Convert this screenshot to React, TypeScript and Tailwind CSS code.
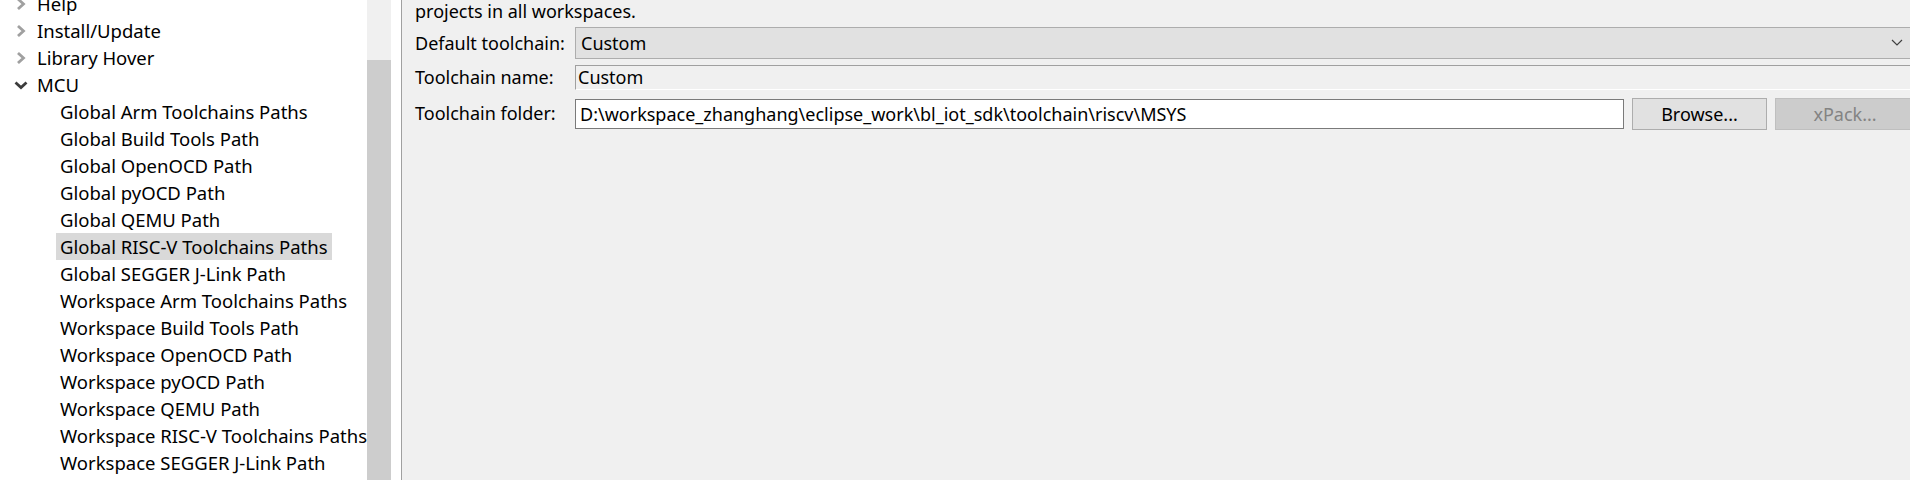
import React from 'react';

const font = { fontFamily: '"Noto Sans", "Open Sans", sans-serif' };

const topItems = ['Help', 'Install/Update', 'Library Hover'];

const mcuItems = [
  'Global Arm Toolchains Paths',
  'Global Build Tools Path',
  'Global OpenOCD Path',
  'Global pyOCD Path',
  'Global QEMU Path',
  'Global RISC-V Toolchains Paths',
  'Global SEGGER J-Link Path',
  'Workspace Arm Toolchains Paths',
  'Workspace Build Tools Path',
  'Workspace OpenOCD Path',
  'Workspace pyOCD Path',
  'Workspace QEMU Path',
  'Workspace RISC-V Toolchains Paths',
  'Workspace SEGGER J-Link Path',
];

const ChevronRight = () => (
  <svg width="14" height="14" viewBox="0 0 14 14" className="shrink-0">
    <polyline points="4,2 9.5,7 4,12" fill="none" stroke="#a0a0a0" strokeWidth="2.8" />
  </svg>
);

const ChevronDown = () => (
  <svg width="14" height="14" viewBox="0 0 14 14" className="shrink-0">
    <polyline points="1.5,4.5 7,9.5 12.5,4.5" fill="none" stroke="#3c3c3c" strokeWidth="2.8" />
  </svg>
);

const TreeRow: React.FC<{ label: string; selected?: boolean }> = ({ label, selected }) => (
  <div className="h-[27px] flex items-center pl-[56px]">
    <span className={`h-[27px] leading-[27px] px-[4px] whitespace-nowrap ${selected ? 'bg-[#d9d9d9]' : ''}`}>
      {label}
    </span>
  </div>
);

const App: React.FC = () => {
  return (
    <div className="flex h-[480px] w-[1910px] overflow-hidden text-[18px] text-black" style={font}>
      {/* tree */}
      <div className="w-[367px] shrink-0 bg-white overflow-hidden text-[18.5px]">
        <div className="-mt-[10px]">
          {topItems.map((t) => (
            <div key={t} className="h-[27px] flex items-center pl-[14px] gap-[9px]">
              <ChevronRight />
              <span className="whitespace-nowrap">{t}</span>
            </div>
          ))}
          <div className="h-[27px] flex items-center pl-[14px] gap-[9px]">
            <ChevronDown />
            <span>MCU</span>
          </div>
          {mcuItems.map((t) => (
            <TreeRow key={t} label={t} selected={t === 'Global RISC-V Toolchains Paths'} />
          ))}
        </div>
      </div>

      {/* scrollbar */}
      <div className="w-[24px] shrink-0 flex flex-col bg-[#f0f0f0]">
        <div className="h-[60px]" />
        <div className="flex-1 bg-[#cdcdcd]" />
      </div>
      <div className="w-[11px] shrink-0 bg-white border-r border-[#a0a0a0]" />

      {/* page */}
      <div className="flex-1 bg-[#f0f0f0] pl-[13px]">
        <div className="h-[22px] leading-[22px] whitespace-nowrap">projects in all workspaces.</div>
        <div className="grid grid-cols-[160px_1fr] gap-y-[5px] items-center mt-[5px]">
          <div className="whitespace-nowrap">Default toolchain:</div>
          <div className="h-[32px] -mr-[20px] bg-[#e1e1e1] border border-[#adadad] flex items-center justify-between pl-[5px] pr-[26px]">
            <span>Custom</span>
            <svg width="12" height="8" viewBox="0 0 12 8">
              <polyline points="1,1 6,6 11,1" fill="none" stroke="#404040" strokeWidth="1.2" />
            </svg>
          </div>

          <div className="whitespace-nowrap">Toolchain name:</div>
          <div className="h-[25px] -mr-[20px] border-t border-l border-[#a0a0a0] border-b-white border-b border-r-white flex items-center pl-[2px]">
            Custom
          </div>

          <div className="whitespace-nowrap">Toolchain folder:</div>
          <div className="flex items-center gap-[8px] mt-[2px]">
            <div className="w-[1049px] h-[30px] bg-white border border-[#7a7a7a] flex items-center pl-[4px] whitespace-nowrap">
              D:\workspace_zhanghang\eclipse_work\bl_iot_sdk\toolchain\riscv\MSYS
            </div>
            <div className="w-[135px] h-[32px] bg-[#e1e1e1] border border-[#adadad] flex items-center justify-center">
              Browse...
            </div>
            <div className="w-[140px] h-[32px] -mr-[20px] bg-[#cccccc] border border-[#bfbfbf] flex items-center justify-center text-[#838383]">
              xPack...
            </div>
          </div>
        </div>
      </div>
    </div>
  );
};

export default App;
